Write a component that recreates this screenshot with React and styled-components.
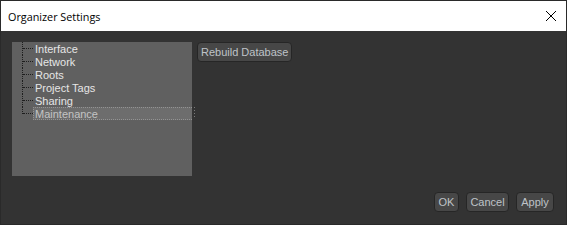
import React from 'react';
import styled, { createGlobalStyle } from 'styled-components';

const Global = createGlobalStyle`
  html, body { margin: 0; padding: 0; background: #333; }
  * { box-sizing: border-box; }
`

const Window = styled.div`
  width: 567px;
  height: 225px;
  border: 1px solid #2a2a2a;
  display: flex;
  flex-direction: column;
  background: #333333;
  font-family: "Liberation Sans", Arial, sans-serif;
  font-size: 11px;
`

const TitleBar = styled.div`
  height: 30px;
  background: #ffffff;
  display: flex;
  align-items: center;
  justify-content: space-between;
  padding: 0 8px 0 7px;
  font-family: "Open Sans", "Noto Sans", sans-serif;
  font-size: 10.8px;
  color: #000;
`

const Close = styled.button`
  border: none;
  background: none;
  padding: 0;
  width: 12px;
  height: 12px;
  margin-right: 1px;
  display: flex;
`

const Body = styled.div`
  flex: 1;
  display: flex;
  flex-direction: column;
  padding: 11px 12px 12px 11px;
`

const TopRow = styled.div`
  display: flex;
  align-items: flex-start;
`

const TreePanel = styled.div`
  width: 180px;
  height: 134px;
  background: #606060;
  padding-left: 10px;
`

const Row = styled.div`
  height: 13px;
  display: flex;
  align-items: stretch;
`

const Connector = styled.span`
  position: relative;
  width: 10px;
  flex: none;
  &::before {
    content: '';
    position: absolute;
    left: 0;
    top: 0;
    height: ${p => (p.$last ? '7px' : '13px')};
    border-left: 1px dotted #1e1e1e;
  }
  &::after {
    content: '';
    position: absolute;
    left: 1px;
    width: 10px;
    top: 6px;
    border-top: 1px dotted #1e1e1e;
  }
`

const Label = styled.span`
  flex: 1;
  padding: 1px 0 0 1px;
  margin-left: 1px;
  line-height: 11px;
  white-space: nowrap;
  color: ${p => (p.$selected ? '#c4c4c4' : '#e6e6e6')};
  background: ${p => (p.$selected ? '#6d6d6d' : 'transparent')};
  border: 1px dotted ${p => (p.$selected ? '#939393' : 'transparent')};
  border-right: none;
`

const Splitter = styled.div`
  width: 5px;
  height: 134px;
  display: flex;
  align-items: flex-start;
  padding-top: 64px;
  padding-left: 1px;
`

const Grip = styled.div`
  width: 3px;
  height: 13px;
  background-image: radial-gradient(circle, #7a7a7a 0.8px, transparent 1px);
  background-size: 3px 3px;
`

const Button = styled.button`
  height: 20px;
  padding: 0 3px;
  border: 1px solid #262626;
  border-radius: 4px;
  background: #474747;
  color: #bfc3c8;
  font-family: "Liberation Sans", Arial, sans-serif;
  font-size: 11px;
  min-width: ${p => p.$min || 0}px;
`

const Footer = styled.div`
  margin-top: 16px;
  display: flex;
  justify-content: flex-end;
  gap: 7px;
`

const items = ['Interface', 'Network', 'Roots', 'Project Tags', 'Sharing', 'Maintenance']

export default function App() {
  return (
    <>
      <Global />
      <Window>
        <TitleBar>
          <span>Organizer Settings</span>
          <Close aria-label="Close">
            <svg width="12" height="12" viewBox="0 0 12 12">
              <path d="M1 1 L11 11 M11 1 L1 11" stroke="#000" strokeWidth="1" />
            </svg>
          </Close>
        </TitleBar>
        <Body>
          <TopRow>
            <TreePanel>
              {items.map((t, i) => (
                <Row key={t}>
                  <Connector $last={i === items.length - 1} />
                  <Label $selected={t === 'Maintenance'}>{t}</Label>
                </Row>
              ))}
            </TreePanel>
            <Splitter>
              <Grip />
            </Splitter>
            <Button>Rebuild Database</Button>
          </TopRow>
          <Footer>
            <Button $min={25}>OK</Button>
            <Button $min={43}>Cancel</Button>
            <Button $min={38}>Apply</Button>
          </Footer>
        </Body>
      </Window>
    </>
  )
}
